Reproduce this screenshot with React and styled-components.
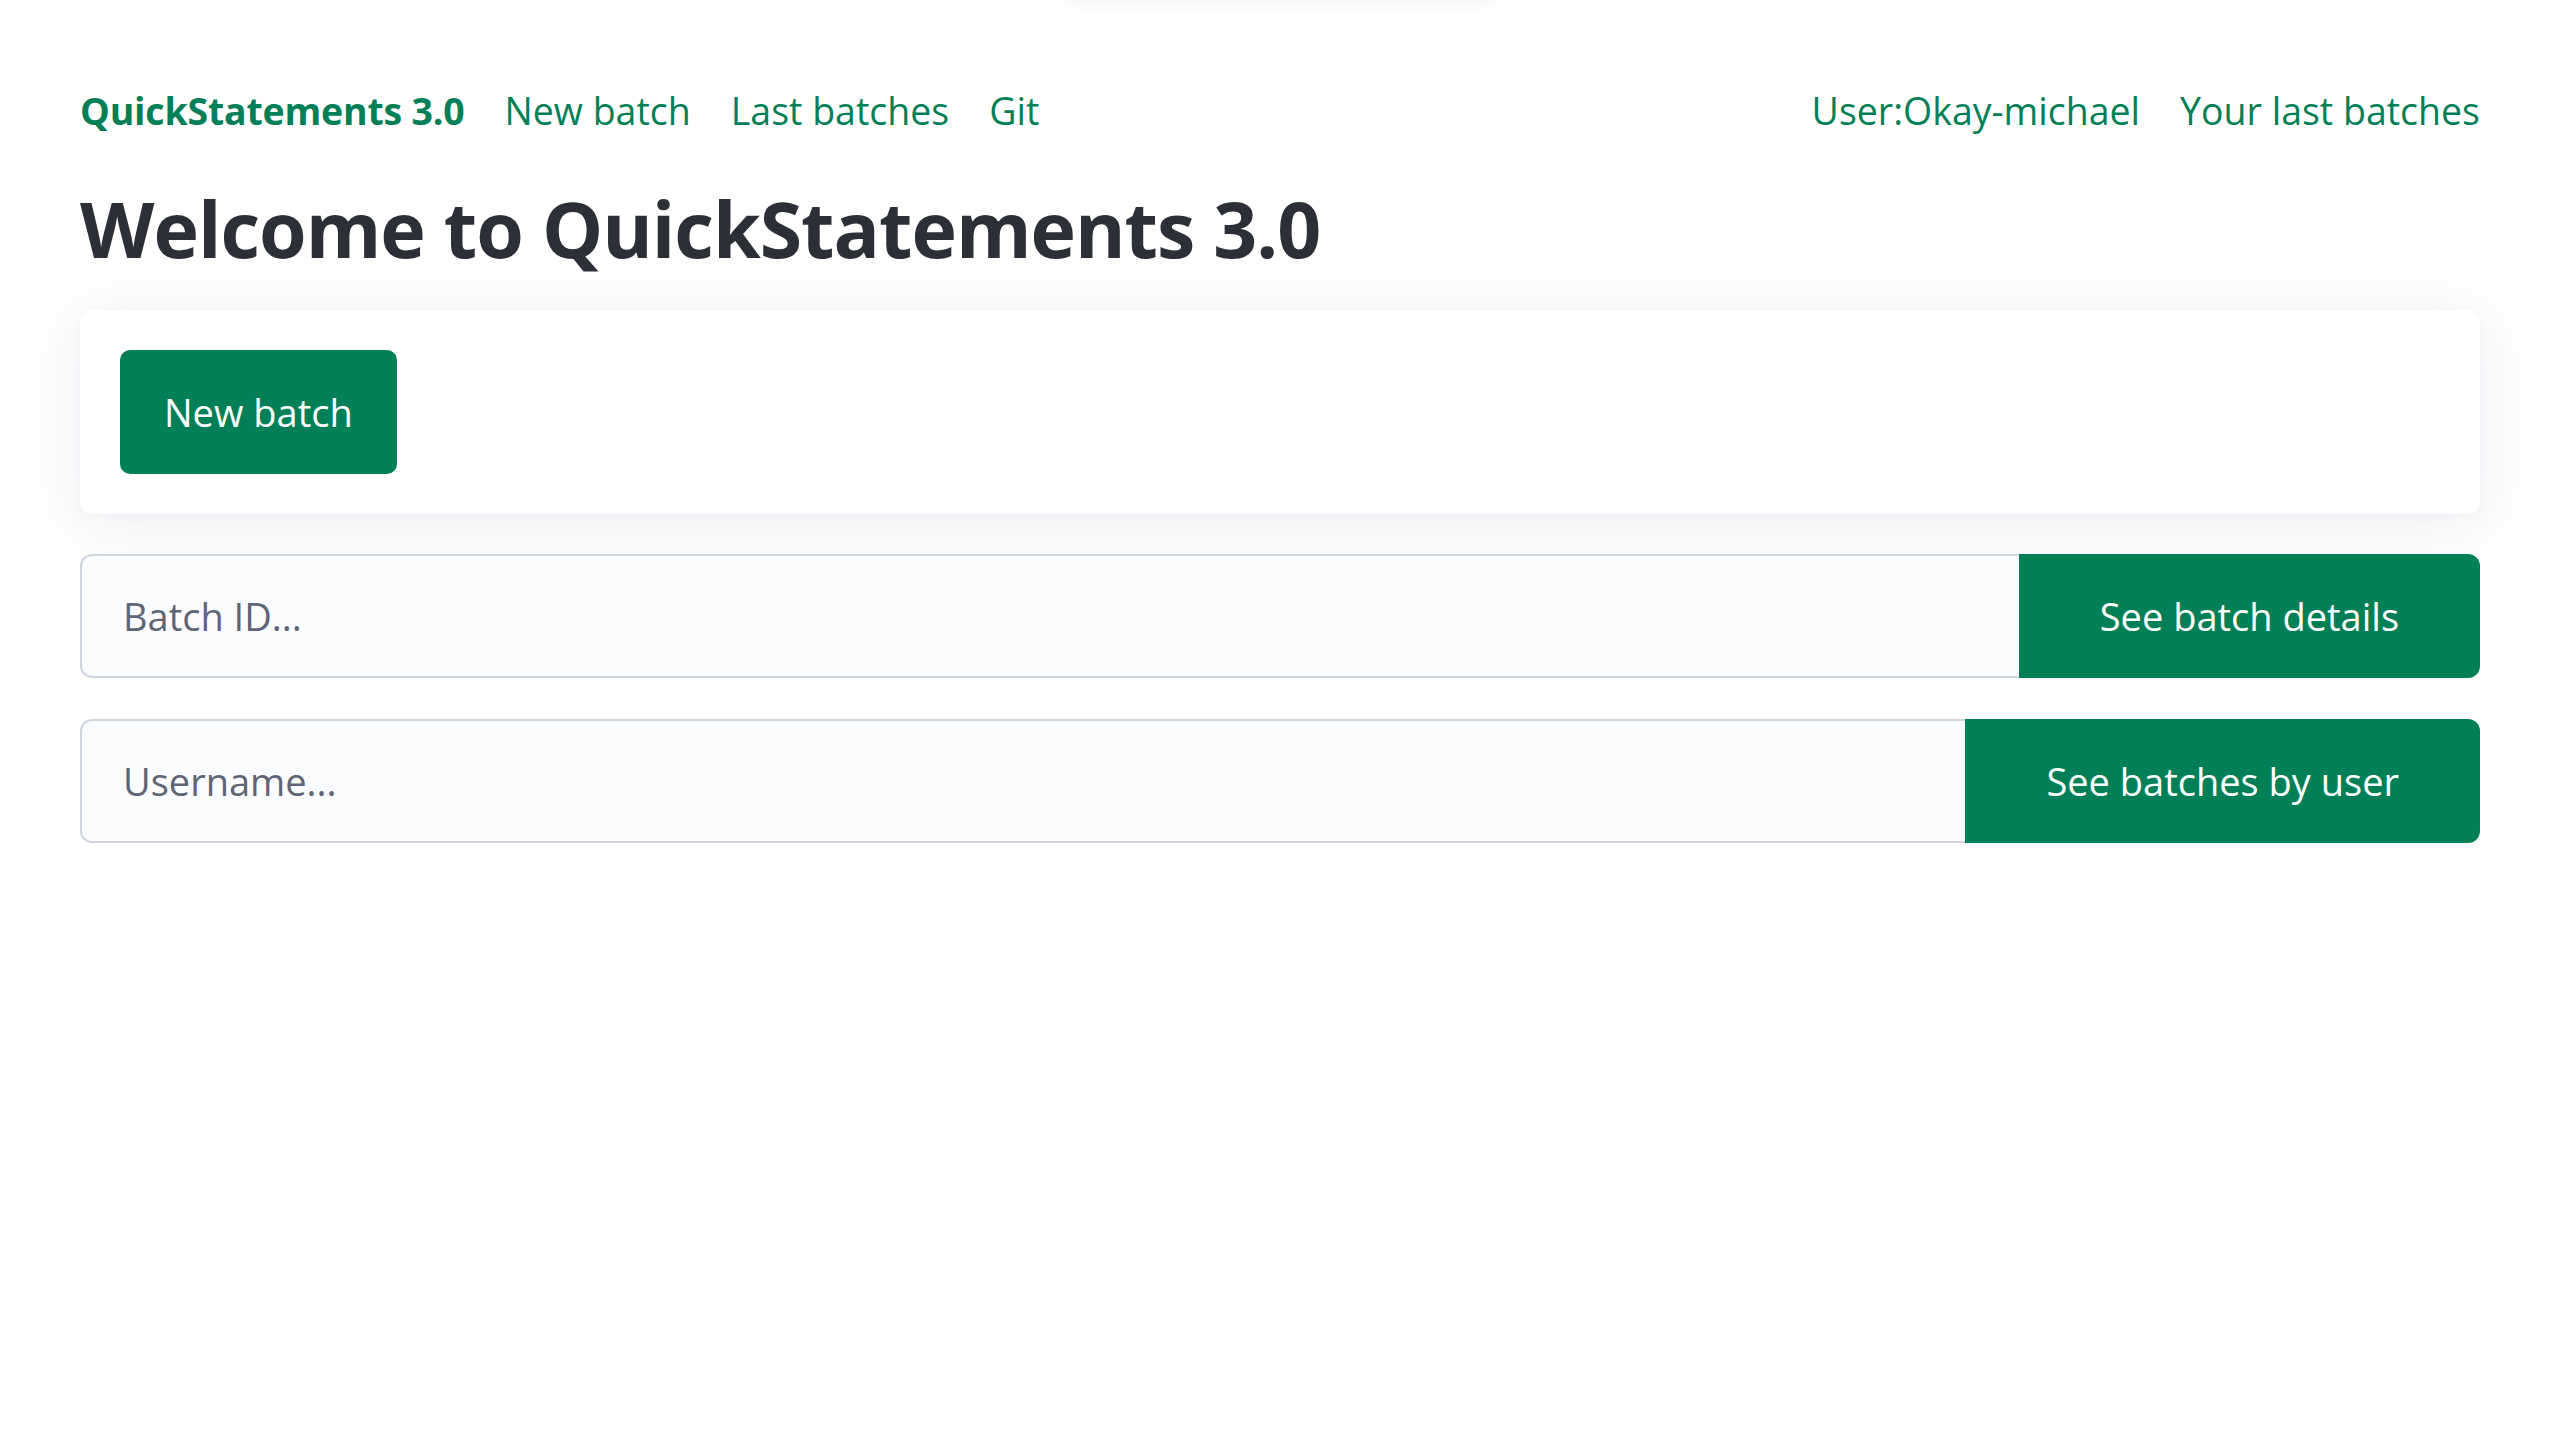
import React from "react";
import styled, { createGlobalStyle } from "styled-components";

const GREEN = "#017f56";

const GlobalStyle = createGlobalStyle`
  html, body {
    margin: 0;
    padding: 0;
    background: #ffffff;
  }
  body {
    font-family: "Open Sans", "Noto Sans", "Liberation Sans", sans-serif;
    color: #2c2f36;
    -webkit-font-smoothing: antialiased;
  }
  * { box-sizing: border-box; }
`;

const Page = styled.div`
  position: relative;
  min-height: 1440px;
  padding: 82px 80px 0;
  overflow: hidden;
`;

const TopGlow = styled.div`
  position: absolute;
  top: -40px;
  left: 1060px;
  width: 440px;
  height: 40px;
  border-radius: 20px;
  box-shadow: 0 2px 18px rgba(0, 0, 0, 0.06);
  pointer-events: none;
`;

const Nav = styled.nav`
  display: flex;
  align-items: center;
  justify-content: space-between;
  height: 58px;
`;

const NavGroup = styled.div`
  display: flex;
  align-items: center;
  gap: 40px;
`;

const NavLink = styled.a`
  color: ${GREEN};
  text-decoration: none;
  font-size: 37.5px;
  font-weight: ${(p) => (p.$brand ? 700 : 400)};
  letter-spacing: ${(p) => (p.$brand ? "-0.2px" : "0")};
  line-height: 58px;
  white-space: nowrap;
  cursor: pointer;
`;

const Title = styled.h1`
  margin: 37px 0 0;
  font-size: 77px;
  font-weight: 700;
  line-height: 104px;
  letter-spacing: -1px;
  color: #2c2f36;
`;

const Card = styled.section`
  margin-top: 29px;
  background: #ffffff;
  border-radius: 12px;
  padding: 40px;
  box-shadow: 0 10px 70px rgba(40, 40, 110, 0.08), 0 2px 8px rgba(40, 40, 100, 0.03);
`;

const PrimaryButton = styled.button`
  display: inline-flex;
  align-items: center;
  justify-content: center;
  height: 124px;
  padding: 0 44px;
  border: none;
  border-radius: 10px;
  background: ${GREEN};
  color: #ffffff;
  font-family: inherit;
  font-size: 38px;
  cursor: pointer;
`;

const Forms = styled.div`
  display: flex;
  flex-direction: column;
  gap: 41px;
  margin-top: 40px;
`;

const InputGroup = styled.div`
  display: flex;
  height: 124px;
`;

const TextInput = styled.input`
  flex: 1;
  min-width: 0;
  height: 100%;
  padding: 0 41px;
  background: #fbfcfd;
  border: 2px solid #cfd4df;
  border-right: none;
  border-radius: 12px 0 0 12px;
  font-family: inherit;
  font-size: 38px;
  color: #2c2f36;
  outline: none;

  &::placeholder {
    color: #5d6576;
    opacity: 1;
  }
`;

const GroupButton = styled.button`
  flex: none;
  height: 100%;
  padding: 0 81px;
  border: none;
  border-radius: 0 12px 12px 0;
  background: ${GREEN};
  color: #ffffff;
  font-family: inherit;
  font-size: 38px;
  cursor: pointer;
`;

export default function App() {
  return (
    <>
      <GlobalStyle />
      <Page>
        <TopGlow />
        <Nav>
          <NavGroup>
            <NavLink $brand>QuickStatements 3.0</NavLink>
            <NavLink>New batch</NavLink>
            <NavLink>Last batches</NavLink>
            <NavLink>Git</NavLink>
          </NavGroup>
          <NavGroup>
            <NavLink>User:Okay-michael</NavLink>
            <NavLink>Your last batches</NavLink>
          </NavGroup>
        </Nav>
        <Title>Welcome to QuickStatements 3.0</Title>
        <Card>
          <PrimaryButton>New batch</PrimaryButton>
        </Card>
        <Forms>
          <InputGroup>
            <TextInput placeholder="Batch ID..." />
            <GroupButton>See batch details</GroupButton>
          </InputGroup>
          <InputGroup>
            <TextInput placeholder="Username..." />
            <GroupButton>See batches by user</GroupButton>
          </InputGroup>
        </Forms>
      </Page>
    </>
  );
}
